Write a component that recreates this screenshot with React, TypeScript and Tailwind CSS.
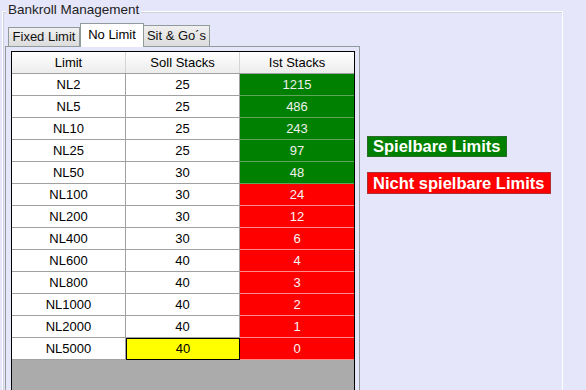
const rows = [
  { limit: 'NL2', soll: 25, ist: 1215 },
  { limit: 'NL5', soll: 25, ist: 486 },
  { limit: 'NL10', soll: 25, ist: 243 },
  { limit: 'NL25', soll: 25, ist: 97 },
  { limit: 'NL50', soll: 30, ist: 48 },
  { limit: 'NL100', soll: 30, ist: 24 },
  { limit: 'NL200', soll: 30, ist: 12 },
  { limit: 'NL400', soll: 30, ist: 6 },
  { limit: 'NL600', soll: 40, ist: 4 },
  { limit: 'NL800', soll: 40, ist: 3 },
  { limit: 'NL1000', soll: 40, ist: 2 },
  { limit: 'NL2000', soll: 40, ist: 1 },
  { limit: 'NL5000', soll: 40, ist: 0 },
];

export default function App() {
  return (
    <div className="w-[586px] h-[390px] overflow-hidden bg-[#e6e6fa] font-['Liberation_Sans',Arial,sans-serif] text-[13px] text-black">
      {/* Groupbox */}
      <div className="relative ml-[2px] mt-[11px] w-[561px] h-[400px] border-t border-l border-r border-white shadow-[inset_1px_1px_0_#d0d0e0]">
        <span className="absolute -top-[10px] left-[3px] bg-[#e6e6fa] px-[2px] leading-[16px] text-[13.5px] text-[#222]">
          Bankroll Management
        </span>

        <div className="flex pl-[2px] pt-[10px]">
          {/* Tab control */}
          <div className="w-[355px] flex flex-col">
            <div className="flex items-end h-[24px] pl-[3px]">
              <div className="h-[19px] w-[72px] flex items-center justify-center bg-gradient-to-b from-[#f0f0f0] to-[#dcdcdc] border border-b-0 border-[#919b9c] text-[#111]">
                Fixed Limit
              </div>
              <div className="relative z-10 -mb-px h-[24px] w-[64px] flex items-start pt-[1px] justify-center bg-white border border-b-0 border-[#919b9c]">
                No Limit
              </div>
              <div className="h-[21px] w-[66px] flex items-center justify-center bg-gradient-to-b from-[#f0f0f0] to-[#dcdcdc] border border-b-0 border-l-0 border-[#919b9c] text-[#111]">
                Sit &amp; Go´s
              </div>
            </div>

            <div className="h-[360px] border border-[#919b9c] bg-[#e6e6fa] pt-[4px] pl-[5px]">
              {/* Grid */}
              <div className="w-[344px] h-[360px] border border-black bg-[#ababab] flex flex-col">
                <div className="flex h-[22px] bg-gradient-to-b from-white to-[#ececec] border-b border-[#a0a0a0]">
                  <div className="w-[114px] flex items-center justify-center border-r border-[#d5d5d5]">Limit</div>
                  <div className="w-[114px] flex items-center justify-center border-r border-[#d5d5d5]">Soll Stacks</div>
                  <div className="flex-1 flex items-center justify-center">Ist Stacks</div>
                </div>
                {rows.map((r, i) => {
                  const ok = r.ist >= r.soll;
                  const last = i === rows.length - 1;
                  return (
                    <div key={r.limit} className="flex h-[22px]">
                      <div className="w-[114px] flex items-center justify-center bg-white border-r border-b border-[#a0a0a0]">
                        {r.limit}
                      </div>
                      {last ? (
                        <div className="w-[114px] flex items-center justify-center bg-[#ffff00] border border-black">
                          {r.soll}
                        </div>
                      ) : (
                        <div className="w-[114px] flex items-center justify-center bg-white border-r border-b border-[#a0a0a0]">
                          {r.soll}
                        </div>
                      )}
                      <div
                        className={
                          ok
                            ? 'flex-1 flex items-center justify-center bg-[#008000] text-[#f0f0f0] border-b border-[#5ca65c]'
                            : 'flex-1 flex items-center justify-center bg-[#ff0000] text-[#f5f5f5] border-b border-[#ff8a8a]'
                        }
                      >
                        {r.ist}
                      </div>
                    </div>
                  );
                })}
              </div>
            </div>
          </div>

          {/* Legend */}
          <div className="ml-[7px] pt-[114px] flex flex-col items-start gap-[15px]">
            <div className="h-[21px] flex items-center pl-[5px] pr-[6px] bg-[#008000] border border-[#2a6a2a] text-white font-bold text-[16.5px]">
              Spielbare Limits
            </div>
            <div className="h-[22px] flex items-center pl-[5px] pr-[6px] bg-[#ff0000] border border-[#b03030] text-white font-bold text-[16.5px]">
              Nicht spielbare Limits
            </div>
          </div>
        </div>
      </div>
    </div>
  );
}
